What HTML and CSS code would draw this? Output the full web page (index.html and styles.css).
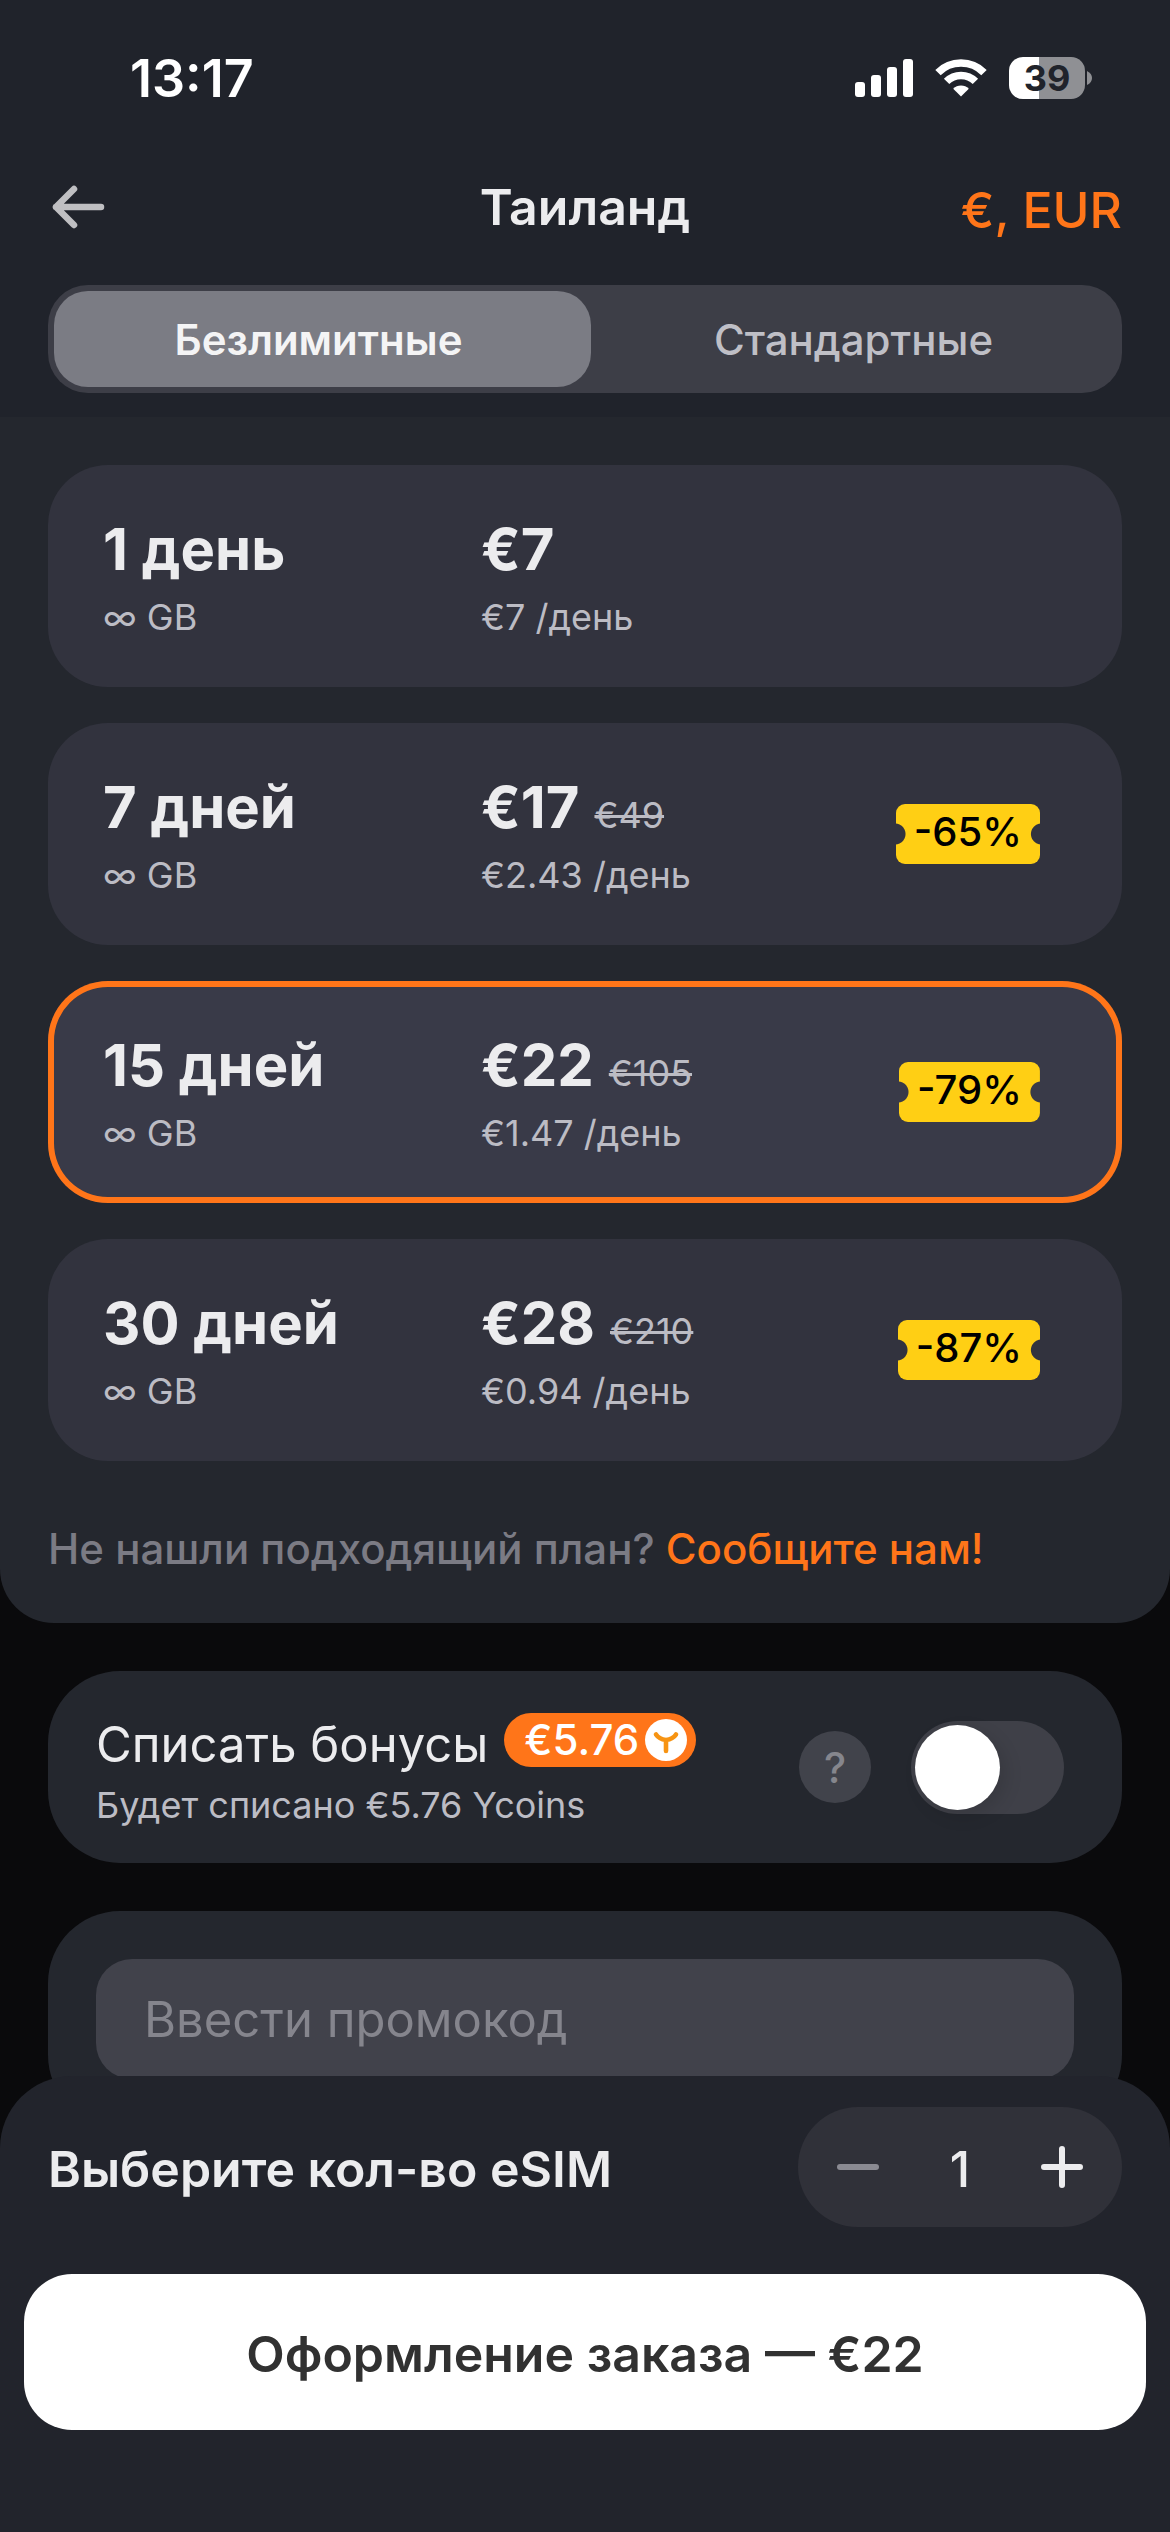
FILE: index.html
```
<!DOCTYPE html>
<html lang="ru">
<head>
<meta charset="utf-8">
<meta name="viewport" content="width=device-width, initial-scale=1">
<title>Таиланд</title>
<link rel="stylesheet" href="styles.css">
</head>
<body>
<header class="top">
  <div class="status">
    <span class="status-time">13:17</span>
    <div class="status-icons">
      <svg width="58" height="38" viewBox="0 0 58 38" fill="#fff" aria-hidden="true">
        <rect x="0" y="23" width="10" height="15" rx="3"/>
        <rect x="16" y="16" width="10" height="22" rx="3"/>
        <rect x="32" y="8" width="10" height="30" rx="3"/>
        <rect x="48" y="0" width="10" height="38" rx="3"/>
      </svg>
      <svg width="52" height="38" viewBox="0 0 52 38" aria-hidden="true">
        <g fill="none" stroke="#fff" stroke-width="7.6">
          <path d="M3 13.6A32.500 32.500 0 0 1 49 13.600"/>
          <path d="M11.600 22.400A20.400 20.400 0 0 1 40.400 22.400"/>
        </g>
        <path d="M26 37.500L18.200 29.800A11 11 0 0 1 33.800 29.800Z" fill="#fff"/>
      </svg>
      <div class="battery">
        <span class="battery-body">39</span>
        <svg width="5" height="14" viewBox="0 0 5 14" aria-hidden="true"><path d="M0 0Q5 2.500 5 7T0 14Z" fill="#8f9094"/></svg>
      </div>
    </div>
  </div>
  <div class="nav">
    <button class="back" type="button" aria-label="Назад">
      <svg width="54" height="46" viewBox="0 0 54 46" fill="none" stroke="#bfbfc2" stroke-width="6.500" stroke-linecap="round" stroke-linejoin="round" aria-hidden="true"><path d="M22 5L4 23L22 41M4 23H49"/></svg>
    </button>
    <h1 class="nav-title">Таиланд</h1>
    <button class="currency" type="button">€, EUR</button>
  </div>
  <div class="segment" role="tablist">
    <button class="segment-item segment-item-active" type="button" role="tab" aria-selected="true">Безлимитные</button>
    <button class="segment-item" type="button" role="tab" aria-selected="false">Стандартные</button>
  </div>
</header>

<main>
  <section class="plans">
    <label class="plan">
      <input class="plan-radio" type="radio" name="plan">
      <span class="plan-col"><b class="plan-main">1 день</b><span class="plan-sub">∞ GB</span></span>
      <span class="plan-col"><span class="plan-price"><b class="plan-main">€7</b></span><span class="plan-sub">€7 /день</span></span>
    </label>
    <label class="plan">
      <input class="plan-radio" type="radio" name="plan">
      <span class="plan-col"><b class="plan-main">7 дней</b><span class="plan-sub">∞ GB</span></span>
      <span class="plan-col"><span class="plan-price"><b class="plan-main">€17</b><s class="plan-old">€49</s></span><span class="plan-sub">€2.43 /день</span></span>
      <span class="ticket">-65%</span>
    </label>
    <label class="plan">
      <input class="plan-radio" type="radio" name="plan" checked>
      <span class="plan-col"><b class="plan-main">15 дней</b><span class="plan-sub">∞ GB</span></span>
      <span class="plan-col"><span class="plan-price"><b class="plan-main">€22</b><s class="plan-old">€105</s></span><span class="plan-sub">€1.47 /день</span></span>
      <span class="ticket">-79%</span>
    </label>
    <label class="plan">
      <input class="plan-radio" type="radio" name="plan">
      <span class="plan-col"><b class="plan-main">30 дней</b><span class="plan-sub">∞ GB</span></span>
      <span class="plan-col"><span class="plan-price"><b class="plan-main">€28</b><s class="plan-old">€210</s></span><span class="plan-sub">€0.94 /день</span></span>
      <span class="ticket">-87%</span>
    </label>
    <p class="hint">Не нашли подходящий план? <a class="hint-link" href="#">Сообщите нам!</a></p>
  </section>

  <section class="card bonus">
    <div class="bonus-text">
      <div class="bonus-head">
        <label class="bonus-title" for="bonus">Списать бонусы</label>
        <span class="coins">€5.76
          <svg width="42" height="42" viewBox="0 0 42 42" aria-hidden="true"><circle cx="21" cy="21" r="21" fill="#fff"/><path d="M11 15.500Q14 20 21 21Q28 20 31 15.500M21 21V32" fill="none" stroke="#f79413" stroke-width="4.600" stroke-linecap="round"/></svg>
        </span>
      </div>
      <p class="bonus-sub">Будет списано €5.76 Ycoins</p>
    </div>
    <button class="help" type="button">?</button>
    <input class="toggle" id="bonus" type="checkbox" role="switch">
  </section>

  <section class="card promo">
    <input class="promo-input" type="text" placeholder="Ввести промокод" aria-label="Ввести промокод">
  </section>
</main>

<footer class="bar">
  <div class="bar-row">
    <span class="bar-title">Выберите кол-во eSIM</span>
    <div class="stepper">
      <button class="step step-muted" type="button" aria-label="Меньше"><svg width="42" height="42" viewBox="0 0 42 42" stroke="currentColor" stroke-width="6" stroke-linecap="round" aria-hidden="true"><path d="M3 21H39"/></svg></button>
      <output class="step-value">1</output>
      <button class="step" type="button" aria-label="Больше"><svg width="42" height="42" viewBox="0 0 42 42" stroke="currentColor" stroke-width="6" stroke-linecap="round" aria-hidden="true"><path d="M3 21H39M21 3V39"/></svg></button>
    </div>
  </div>
  <button class="checkout" type="button">Оформление заказа — €22</button>
</footer>
</body>
</html>
```
FILE: styles.css
```
* {
  box-sizing: border-box;
}

body {
  margin: 0;
  min-height: 100vh;
  background: #0a0a0c;
  color: #ececee;
  font-family: Inter, "Noto Sans", sans-serif;
  font-size: 49px;
}

button,
input {
  margin: 0;
  padding: 0;
  border: 0;
  background: none;
  color: inherit;
  font: inherit;
}

svg {
  display: block;
}

h1,
p {
  margin: 0;
  font-weight: 400;
}

/* Header */
.top {
  padding: 48px 48px 24px;
  background: #20232b;
}

.status {
  display: flex;
  align-items: center;
  justify-content: space-between;
  height: 60px;
  padding: 0 30px 0 82px;
}

.status-time {
  color: #fff;
  font-size: 52px;
  font-weight: 600;
}

.status-icons {
  display: flex;
  align-items: center;
  gap: 22px;
}

.battery {
  display: flex;
  align-items: center;
  gap: 2px;
}

.battery-body {
  width: 76px;
  border-radius: 14px;
  background: linear-gradient(90deg, #fff 30px, #8f9094 30px);
  color: #20232b;
  font-size: 36px;
  font-weight: 700;
  line-height: 42px;
  text-align: center;
}

.nav {
  display: grid;
  grid-template-columns: 1fr auto 1fr;
  align-items: center;
  height: 108px;
  margin: 45px 0 24px;
}

.back {
  justify-self: start;
  padding: 0 4px;
}

.nav-title {
  font-size: 50px;
  font-weight: 600;
}

.currency {
  justify-self: end;
  padding-top: 6px;
  color: #ff7519;
  font-size: 50px;
  font-weight: 500;
}

.segment {
  display: grid;
  grid-template-columns: calc(50% + 6px) 1fr;
  padding: 6px;
  border-radius: 40px;
  background: #3d3e47;
}

.segment-item {
  height: 96px;
  border-radius: 34px;
  color: #bfbfc6;
  font-size: 42px;
  font-weight: 500;
}

.segment-item-active {
  padding-right: 8px;
  background: #7b7c84;
  color: #f4f4f5;
  font-weight: 600;
}

/* Plan list */
.plans {
  display: flex;
  flex-direction: column;
  gap: 36px;
  padding: 48px 48px 30px;
  border-radius: 0 0 54px 54px;
  background: #24272e;
}

.plan {
  position: relative;
  display: grid;
  grid-template-columns: 378px 1fr auto;
  align-items: center;
  height: 222px;
  padding: 0 82px 0 55px;
  border-radius: 60px;
  background: #32333e;
}

.plan:has(:checked) {
  background: #393a48;
  box-shadow: inset 0 0 0 6px #ff7519;
}

.plan-radio {
  position: absolute;
  inset: 0;
  width: 100%;
  height: 100%;
  opacity: 0;
}

.plan-col {
  display: flex;
  flex-direction: column;
  gap: 12px;
  padding-top: 2px;
}

.plan-price {
  display: flex;
  align-items: baseline;
  gap: 15px;
}

.plan-main {
  font-size: 58px;
  font-weight: 700;
  line-height: 68px;
}

.plan-sub,
.plan-old,
.bonus-sub {
  color: #bcbcc4;
  font-size: 36px;
  font-weight: 400;
  line-height: 44px;
}

.plan-old {
  text-decoration-thickness: 3px;
}

.ticket {
  height: 60px;
  padding: 0 18px;
  border-radius: 9px;
  background:
    radial-gradient(circle at -1px 50%, transparent 10px, #ffcf14 11px) left / 50% 100% no-repeat,
    radial-gradient(circle at calc(100% + 1px) 50%, transparent 10px, #ffcf14 11px) right / 51% 100% no-repeat;
  color: #000;
  font-size: 40px;
  font-weight: 500;
  line-height: 56px;
}

.hint {
  padding: 22px 0 14px;
  color: #7b7b84;
  font-size: 42px;
  font-weight: 500;
  line-height: 60px;
}

.hint-link {
  color: #ff7519;
  text-decoration: none;
}

/* Cards below the plans */
.card {
  margin: 48px 48px 0;
  padding: 48px;
  border-radius: 72px;
  background: #24272e;
}

.bonus {
  display: flex;
  align-items: center;
  height: 192px;
  padding-right: 58px;
}

.bonus-text {
  flex: 1;
  padding-top: 6px;
}

.bonus-head {
  display: flex;
  align-items: flex-start;
  gap: 16px;
}

.bonus-title {
  line-height: 64px;
}

.bonus-sub {
  margin-top: 6px;
}

.coins {
  display: flex;
  align-items: center;
  gap: 6px;
  height: 54px;
  padding: 0 9px 0 20px;
  border-radius: 27px;
  background: #ff7519;
  color: #fff;
  font-size: 42px;
  font-weight: 500;
  line-height: 54px;
}

.help {
  width: 72px;
  height: 72px;
  margin-right: 40px;
  border-radius: 50%;
  background: #41434b;
  color: #85868d;
  font-size: 42px;
  font-weight: 500;
}

.toggle {
  width: 153px;
  height: 93px;
  padding: 4px;
  border-radius: 47px;
  background: #3f4048;
  appearance: none;
}

.toggle::before {
  content: "";
  display: block;
  width: 85px;
  height: 85px;
  border-radius: 50%;
  background: #fff;
  box-shadow: 6px 6px 18px rgb(0 0 0 / 12%);
}

.toggle:checked {
  background: #ff7519;
}

.toggle:checked::before {
  margin-left: auto;
}

.promo-input {
  display: block;
  width: 100%;
  height: 120px;
  padding: 0 48px;
  border-radius: 36px;
  background: #41424b;
}

.promo-input::placeholder {
  color: #85858d;
}

/* Bottom bar */
.bar {
  position: fixed;
  right: 0;
  bottom: 0;
  left: 0;
  padding: 31px 24px 102px;
  border-radius: 72px 72px 0 0;
  background: #22242c;
}

.bar-row {
  display: flex;
  align-items: center;
  justify-content: space-between;
  padding: 0 24px;
}

.bar-title {
  padding-top: 4px;
  font-size: 50px;
  font-weight: 600;
}

.stepper {
  display: flex;
  align-items: center;
  justify-content: space-between;
  width: 324px;
  height: 120px;
  padding: 0 39px;
  border-radius: 60px;
  background: #303139;
}

.step-muted {
  color: #8a8a92;
}

.step-value {
  padding-top: 4px;
  font-weight: 500;
}

.checkout {
  width: 100%;
  height: 156px;
  margin-top: 47px;
  padding-top: 4px;
  border-radius: 48px;
  background: #fff;
  color: #313131;
  font-size: 50px;
  font-weight: 600;
}
```
